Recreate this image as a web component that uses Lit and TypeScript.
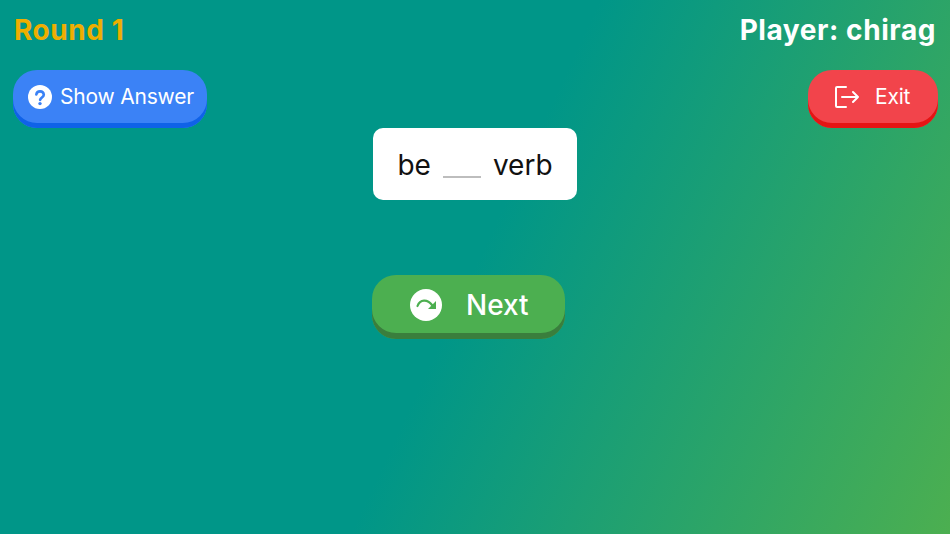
import { LitElement, html, css } from "lit";
import { customElement } from "lit/decorators.js";

@customElement("app-root")
export class AppRoot extends LitElement {
  static styles = css`
    :host {
      display: block;
      width: 950px;
      height: 534px;
      overflow: hidden;
      font-family: Inter, "Liberation Sans", sans-serif;
    }
    .screen {
      box-sizing: border-box;
      width: 950px;
      height: 534px;
      background: linear-gradient(115deg, #009688 0%, #009688 50%, #4caf50 100%);
      padding: 13px 14px 0 14px;
      display: flex;
      flex-direction: column;
    }
    .header {
      display: flex;
      justify-content: space-between;
      align-items: center;
      height: 34px;
      font-size: 28px;
      font-weight: 700;
      line-height: 34px;
      letter-spacing: 0.57px;
    }
    .round { color: #eeae00; }
    .player { color: #fff; }
    .actions {
      display: flex;
      justify-content: space-between;
      margin: 23px -2px 0 -1px;
    }
    .btn {
      box-sizing: border-box;
      display: flex;
      align-items: center;
      height: 58px;
      padding-bottom: 5px;
      border-radius: 24px;
      color: #fff;
      font-size: 21px;
      font-weight: 400;
      letter-spacing: -0.2px;
    }
    .answer {
      width: 194px;
      padding-left: 15px;
      gap: 8px;
      background: #3b82f6;
      box-shadow: inset 0 -5px 0 #0f62e8;
    }
    .exit {
      width: 130px;
      padding-left: 27px;
      gap: 16px;
      background: #f2444b;
      box-shadow: inset 0 -5px 0 #e51414;
    }
    .card {
      box-sizing: border-box;
      align-self: flex-start;
      margin-left: 359px;
      width: 204px;
      height: 72px;
      padding-top: 1px;
      background: #fff;
      border-radius: 10px;
      display: flex;
      align-items: center;
      justify-content: center;
      gap: 12px;
      font-size: 28px;
      color: #111;
    }
    .blank {
      box-sizing: content-box;
      width: 38px;
      height: 24px;
      margin-top: 1px;
      border-bottom: 2px solid #bdbdbd;
    }
    .next {
      align-self: flex-start;
      margin: 75px 0 0 358px;
      width: 193px;
      height: 64px;
      padding-left: 38px;
      padding-bottom: 4px;
      gap: 24px;
      font-size: 28px;
      font-weight: 500;
      letter-spacing: 0;
      background: #4caf50;
      box-shadow: inset 0 -6px 0 #3a7e3d;
    }
    svg { display: block; flex: none; }
  `;

  render() {
    return html`
      <div class="screen">
        <div class="header">
          <span class="round">Round 1</span>
          <span class="player">Player: chirag</span>
        </div>
        <div class="actions">
          <div class="btn answer">
            <svg width="24" height="24" viewBox="0 0 24 24">
              <circle cx="12" cy="12" r="12" fill="#fff"></circle>
              <path d="M8.300 9.400a3.800 3.800 0 0 1 7.500.300c0 2.600-3.200 2.900-3.700 5.200" fill="none" stroke="#3b82f6" stroke-width="2.600" stroke-linecap="round"></path>
              <circle cx="12" cy="18.600" r="1.700" fill="#3b82f6"></circle>
            </svg>
            <span>Show Answer</span>
          </div>
          <div class="btn exit">
            <svg width="24" height="22" viewBox="0 0 24 22" fill="none" stroke="#fff" stroke-width="2" stroke-linecap="round" stroke-linejoin="round">
              <path d="M11 1H2a1 1 0 0 0-1 1v18a1 1 0 0 0 1 1h9"></path>
              <path d="M7 11h16M18 6l5 5-5 5"></path>
            </svg>
            <span>Exit</span>
          </div>
        </div>
        <div class="card">
          <span>be</span>
          <span class="blank"></span>
          <span>verb</span>
        </div>
        <div class="btn next">
          <svg width="32" height="32" viewBox="0 0 32 32">
            <circle cx="16" cy="16" r="16" fill="#fff"></circle>
            <path d="M7.500 17c2.500-7 10-7 14.500-1" fill="none" stroke="#4caf50" stroke-width="2.200" stroke-linecap="round"></path>
            <path d="M26 12v8h-8z" fill="#4caf50"></path>
          </svg>
          <span>Next</span>
        </div>
      </div>
    `;
  }
}
